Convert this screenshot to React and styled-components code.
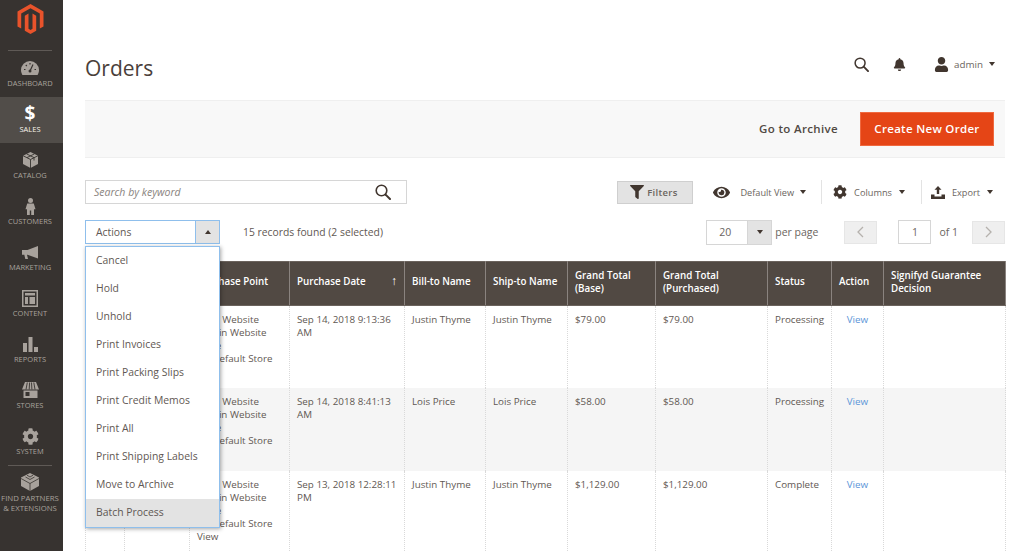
import React from 'react';
import styled, { createGlobalStyle } from 'styled-components';
import { FaBell, FaCog, FaEye, FaFilter, FaUser } from 'react-icons/fa';

const GlobalStyle = createGlobalStyle`
  html, body {
    margin: 0;
    height: 100%;
    overflow: hidden;
    background: #fff;
    font-family: "Open Sans", "Liberation Sans", sans-serif;
    color: #514943;
  }
  * { box-sizing: border-box; }
`;

const Page = styled.div`
  display: flex;
  width: 1024px;
  height: 551px;
  overflow: hidden;
`;

const Sidebar = styled.nav`
  width: 63px;
  flex: none;
  background: #373330;
  display: flex;
  flex-direction: column;
  align-items: stretch;
`;

const LogoBox = styled.div`
  height: 51px;
  display: flex;
  justify-content: center;
  padding: 4px 3px 0 0;
  position: relative;
  &::after {
    content: '';
    position: absolute;
    left: 8px;
    right: 11px;
    bottom: 0;
    height: 1px;
    background: #5f5a56;
  }
`;

const NavItem = styled.a`
  height: ${p => (p.$tall ? '60px' : '46px')};
  padding-right: 3px;
  display: flex;
  flex-direction: column;
  align-items: center;
  justify-content: flex-start;
  color: ${p => (p.$active ? '#f7f3eb' : '#a8a29c')};
  background: ${p => (p.$active ? '#514d49' : 'transparent')};
  font-size: ${p => (p.$tall ? '7.8px' : '7.5px')};
  line-height: 10px;
  text-align: center;
  white-space: nowrap;
  position: relative;
  ${p => p.$tall && `
    &::before {
      content: '';
      position: absolute;
      top: 0;
      left: 8px;
      right: 11px;
      height: 1px;
      background: #5f5a56;
    }
  `}
`;

const NavIcon = styled.span`
  height: 20px;
  margin-top: 7px;
  margin-bottom: ${p => p.$gap || 0}px;
  display: flex;
  align-items: center;
  justify-content: center;
  color: ${p => (p.$active ? '#fff' : '#a8a29c')};
`;

const Dollar = styled.span`
  display: block;
  height: 20px;
  font-size: 19px;
  font-weight: 700;
  line-height: 19px;
  color: #fff;
`;

const Main = styled.main`
  flex: 1;
  min-width: 0;
  padding: 0 19px 0 22px;
`;

const Header = styled.header`
  height: 100px;
  display: flex;
  align-items: center;
  justify-content: space-between;
  padding: 46px 0 10px;
`;

const Title = styled.h1`
  margin: 0;
  font-size: 21px;
  font-weight: 400;
  color: #4a403a;
`;

const HeaderTools = styled.div`
  display: flex;
  align-items: center;
  padding-right: 10px;
  margin-bottom: 8px;
  color: #41362f;
`;

const HeaderIcon = styled.span`
  display: flex;
  font-size: ${p => p.$size || 14}px;
  margin-right: ${p => p.$gap || 0}px;
`;

const AdminName = styled.span`
  font-size: 9.8px;
  color: #6b6560;
  margin-right: 6px;
`;

const Caret = styled.span`
  display: inline-block;
  width: 0;
  height: 0;
  border-left: 3px solid transparent;
  border-right: 3px solid transparent;
  border-${p => (p.$up ? 'bottom' : 'top')}: 4px solid #41362f;
`;

const ActionBar = styled.div`
  height: 58px;
  background: #f8f8f8;
  border-top: 1px solid #efefef;
  border-bottom: 1px solid #efefef;
  display: flex;
  align-items: center;
  justify-content: flex-end;
  padding-right: 11px;
`;

const ArchiveLink = styled.span`
  font-size: 11.5px;
  font-weight: 600;
  letter-spacing: 0.35px;
  color: #514943;
  margin: 0 22px 2px 0;
`;

const PrimaryButton = styled.button`
  width: 134px;
  height: 34px;
  padding: 0 0 2px;
  border: 1px solid #f0693f;
  background: #e54516;
  color: #fff;
  font: 600 11.5px "Open Sans", sans-serif;
  letter-spacing: 0.3px;
`;

const ToolRow = styled.div`
  display: flex;
  align-items: center;
  justify-content: space-between;
  height: 24px;
  margin-top: ${p => p.$top}px;
`;

const SearchBox = styled.div`
  width: 322px;
  height: 24px;
  border: 1px solid #d6d6d6;
  display: flex;
  align-items: center;
  justify-content: space-between;
  padding: 0 15px 0 8px;
  font-size: 10.5px;
  font-style: italic;
  color: #8a8480;
`;

const ViewTools = styled.div`
  display: flex;
  align-items: center;
  height: 24px;
`;

const FilterButton = styled.button`
  width: 76px;
  height: 23px;
  margin-right: 20px;
  padding: 0 3px 0 0;
  border: 1px solid #cfcfcf;
  background: #e3e3e3;
  color: #6b6560;
  font: 600 9.5px "Open Sans", sans-serif;
  letter-spacing: 0.3px;
  display: flex;
  align-items: center;
  justify-content: center;
  gap: 3px;
  svg { color: #41362f; font-size: 14px; }
`;

const ViewControl = styled.div`
  height: 24px;
  display: flex;
  align-items: center;
  padding: ${p => p.$pad};
  font-size: 9.2px;
  color: #6b6560;
  border-left: ${p => (p.$line ? '1px solid #e3e3e3' : 'none')};
  svg { color: #41362f; }
`;

const ControlLabel = styled.span`
  margin: 0 ${p => p.$right}px 0 ${p => p.$left}px;
`;

const LeftGroup = styled.div`
  display: flex;
  align-items: center;
  position: relative;
`;

const ActionsSelect = styled.div`
  width: 135px;
  height: 24px;
  border: 1px solid #8fbfec;
  display: flex;
  align-items: center;
  justify-content: space-between;
  font-size: 10.4px;
  padding-left: 10px;
  color: #5f5853;
`;

const ArrowBox = styled.span`
  width: 24px;
  height: 100%;
  background: #e3e3e3;
  border-left: 1px solid ${p => p.$line || '#8fbfec'};
  display: flex;
  align-items: center;
  justify-content: center;
`;

const RecordsText = styled.span`
  margin-left: 23px;
  font-size: 10.35px;
  color: #5f5853;
`;

const ActionMenu = styled.ul`
  position: absolute;
  z-index: 5;
  top: 26px;
  left: 0;
  width: 135px;
  margin: 0;
  padding: 0;
  list-style: none;
  background: #fff;
  border: 1px solid #8fbfec;
  box-shadow: 1px 1px 4px rgba(0, 0, 0, 0.35);
`;

const MenuItem = styled.li`
  height: 28px;
  line-height: 26px;
  padding-left: 10px;
  font-size: 10.4px;
  color: #5f5853;
  background: ${p => (p.$hover ? '#e3e3e3' : 'transparent')};
`;

const Pager = styled.div`
  display: flex;
  align-items: center;
  font-size: 10.5px;
  color: #6b6560;
`;

const PerPage = styled.div`
  width: 66px;
  height: 25px;
  border: 1px solid #d6d6d6;
  display: flex;
  align-items: center;
  justify-content: space-between;
  padding-left: 12px;
  margin-right: 3px;
`;

const PageButton = styled.span`
  width: 33px;
  height: 23px;
  background: #efefef;
  border: 1px solid #e6e6e6;
  display: flex;
  align-items: center;
  justify-content: center;
  margin-left: ${p => p.$left || 0}px;
`;

const PageInput = styled.span`
  width: 33px;
  height: 24px;
  border: 1px solid #d6d6d6;
  display: flex;
  align-items: center;
  justify-content: center;
  margin: 0 8px 0 21px;
`;

const TableWrap = styled.div`
  margin-top: 17px;
`;

const Grid = styled.table`
  width: 920px;
  table-layout: fixed;
  border-collapse: collapse;
  font-size: 9.8px;
  line-height: 13px;
  color: #5f5853;
`;

const Th = styled.th`
  height: 44px;
  background: #514943;
  color: #fff;
  font-weight: 600;
  font-size: 9.8px;
  text-align: left;
  padding: 0 7px 4px;
  border: 1px solid #8a837f;
  border-top-color: #6b635d;
  border-bottom-color: #6b635d;
  position: relative;
`;

const SortArrow = styled.span`
  position: absolute;
  right: 7px;
  top: 12px;
  font-size: 12px;
  font-weight: 400;
`;

const Tr = styled.tr`
  background: ${p => (p.$shade ? '#f5f5f5' : '#fff')};
`;

const Td = styled.td`
  height: 82.5px;
  vertical-align: top;
  padding: 7px 7px 0;
  border-left: 1px dotted #d9d9d9;
  border-right: 1px dotted #d9d9d9;
`;

const ViewLink = styled.span`
  display: block;
  text-align: center;
  color: #5b95d8;
`;

const Logo = () => (
  <svg width="27" height="30" viewBox="0 0 27 30">
    <path fill="#e8532b" d="M13.5 0 26.5 7.5V22.5L22.8 24.6V9.6L13.5 4.3 4.2 9.6V24.6L.5 22.5V7.5Z" />
    <path fill="#e8532b" d="M7.8 11.7 11.5 9.6V24.7L13.5 25.9 15.5 24.7V9.6L19.2 11.7V26.7L13.5 30 7.8 26.7Z" />
  </svg>
);

const Gauge = () => (
  <svg width="18" height="14" viewBox="0 0 18 14">
    <path fill="currentColor" d="M9 0a9 9 0 0 0-9 9c0 1.8.5 3.5 1.4 5h15.2c.9-1.5 1.4-3.2 1.4-5a9 9 0 0 0-9-9Z" />
    <path stroke="#373330" strokeWidth="1.2" d="M9 10 12 3.5M3 8.5h1.5M4.800 4l1 1M9 2v1.500M15 8.500h-1.500" />
    <circle cx="9" cy="10" r="1.500" fill="#373330" />
  </svg>
);

const BoxIcon = () => (
  <svg width="15" height="16" viewBox="0 0 15 16">
    <path fill="currentColor" d="M7.500 0 15 3.700V12L7.500 16 0 12V3.700Z" />
    <path fill="none" stroke="#373330" strokeWidth=".9" d="M0 3.700 7.500 7.500 15 3.700M7.500 7.500V16M3.600 1.900 11 5.600V8.500M11.400 1.900 4 5.600" />
  </svg>
);

const Figure = () => (
  <svg width="11" height="17" viewBox="0 0 11 17">
    <circle cx="5.500" cy="2.500" r="2.500" fill="currentColor" />
    <path fill="currentColor" d="M2.200 5.600h6.600L10.500 11.200H9V17H6.200v-4.500H4.800V17H2v-5.800H.5Z" />
  </svg>
);

const Megaphone = () => (
  <svg width="16" height="13" viewBox="0 0 16 13">
    <path fill="currentColor" d="M0 4h5.500L16 0v12.500L5.500 8.800H5L6 13H3.300L2.300 8.800H0Z" />
  </svg>
);

const ContentIcon = () => (
  <svg width="16" height="17" viewBox="0 0 16 17">
    <path fill="currentColor" fillRule="evenodd" d="M0 0h16v17H0Zm1.500 1.500v14h13v-14Z" />
    <path fill="currentColor" d="M3 3h10v2.500H3ZM3 7h3v7H3ZM7.500 7H13v7H7.500Z" />
  </svg>
);

const Bars = () => (
  <svg width="15" height="15" viewBox="0 0 15 15">
    <path fill="currentColor" d="M0 6h4v9H0ZM5.500 0h4v15h-4ZM11 10h4v5h-4Z" />
  </svg>
);

const StoreIcon = () => (
  <svg width="17" height="16" viewBox="0 0 17 16">
    <path fill="currentColor" d="M3 0h11l3 7.500H0Z" />
    <path stroke="#373330" strokeWidth=".9" d="M5.300 .5 4 7.500M7.600 .5 7.200 7.500M9.500 .5 9.900 7.500M11.800 .5 13 7.500" />
    <path fill="currentColor" d="M1.500 8.500h14V16h-14Z" />
    <path fill="#373330" d="M3.500 10h4v4h-4Z" />
  </svg>
);

const Lego = () => (
  <svg width="18" height="18" viewBox="0 0 18 18">
    <path fill="currentColor" d="M9 0 18 4.500V13L9 18 0 13V4.500Z" />
    <path fill="none" stroke="#373330" strokeWidth=".8" d="M0 5.500 9 10.500 18 5.500M9 10.500V18M4.500 4 9 6.500 13.500 4M6 2.200 9 4 12 2.200" />
  </svg>
);

const Magnifier = ({ size = 16 }) => (
  <svg width={size} height={size} viewBox="0 0 16 16">
    <circle cx="6.500" cy="6.500" r="5.300" fill="none" stroke="#41362f" strokeWidth="1.600" />
    <path stroke="#41362f" strokeWidth="2" strokeLinecap="round" d="M10.600 10.600 15 15" />
  </svg>
);

const ExportIcon = () => (
  <svg width="14" height="13" viewBox="0 0 14 13">
    <path fill="currentColor" d="M7 0 10.500 3.800H8.200V8H5.800V3.800H3.500ZM0 8.500h3.500v2h7v-2H14V13H0Z" />
  </svg>
);

const Chevron = ({ dir }) => (
  <svg width="7" height="12" viewBox="0 0 7 12">
    <path fill="none" stroke="#b5b1ad" strokeWidth="1.300" d={dir === 'left' ? 'M6 1 1 6l5 5' : 'M1 1l5 5-5 5'} />
  </svg>
);

const navItems = [
  { label: 'DASHBOARD', icon: <Gauge /> },
  { label: 'SALES', icon: <Dollar>$</Dollar>, active: true },
  { label: 'CATALOG', icon: <BoxIcon /> },
  { label: 'CUSTOMERS', icon: <Figure /> },
  { label: 'MARKETING', icon: <Megaphone /> },
  { label: 'CONTENT', icon: <ContentIcon /> },
  { label: 'REPORTS', icon: <Bars /> },
  { label: 'STORES', icon: <StoreIcon /> },
  { label: 'SYSTEM', icon: <FaCog size={17} /> },
];

const menu = ['Cancel', 'Hold', 'Unhold', 'Print Invoices', 'Print Packing Slips', 'Print Credit Memos', 'Print All', 'Print Shipping Labels', 'Move to Archive', 'Batch Process'];

const columns = [
  { w: 39 }, { w: 65 }, { w: 100, label: 'Purchase Point' },
  { w: 115, label: 'Purchase Date', sort: true }, { w: 81, label: 'Bill-to Name' }, { w: 82, label: 'Ship-to Name' },
  { w: 88, label: <>Grand Total<br />(Base)</> }, { w: 112, label: <>Grand Total<br />(Purchased)</> },
  { w: 64, label: 'Status' }, { w: 52, label: 'Action' }, { w: 122, label: <>Signifyd Guarantee<br />Decision</> },
];

const orders = [
  { date: 'Sep 14, 2018 9:13:36 AM', name: 'Justin Thyme', total: '$79.00', status: 'Processing' },
  { date: 'Sep 14, 2018 8:41:13 AM', name: 'Lois Price', total: '$58.00', status: 'Processing' },
  { date: 'Sep 13, 2018 12:28:11 PM', name: 'Justin Thyme', total: '$1,129.00', status: 'Complete' },
];

const App = () => (
  <Page>
    <GlobalStyle />
    <Sidebar>
      <LogoBox><Logo /></LogoBox>
      {navItems.map(item => (
        <NavItem key={item.label} $active={item.active}>
          <NavIcon $active={item.active}>{item.icon}</NavIcon>
          {item.label}
        </NavItem>
      ))}
      <NavItem $tall>
        <NavIcon $gap={1}>
          <Lego />
        </NavIcon>
        FIND PARTNERS<br />&amp; EXTENSIONS
      </NavItem>
    </Sidebar>

    <Main>
      <Header>
        <Title>Orders</Title>
        <HeaderTools>
          <HeaderIcon $gap={24}><Magnifier size={15} /></HeaderIcon>
          <HeaderIcon $size={13} $gap={28}><FaBell /></HeaderIcon>
          <HeaderIcon $size={15} $gap={5}><FaUser /></HeaderIcon>
          <AdminName>admin</AdminName>
          <Caret />
        </HeaderTools>
      </Header>

      <ActionBar>
        <ArchiveLink>Go to Archive</ArchiveLink>
        <PrimaryButton>Create New Order</PrimaryButton>
      </ActionBar>

      <ToolRow $top={22}>
        <SearchBox>
          Search by keyword
          <Magnifier />
        </SearchBox>
        <ViewTools>
          <FilterButton><FaFilter />Filters</FilterButton>
          <ViewControl $pad="0 15px 0 0">
            <FaEye size={17} />
            <ControlLabel $left={10} $right={6}>Default View</ControlLabel>
            <Caret />
          </ViewControl>
          <ViewControl $line $pad="0 16px 0 11px">
            <FaCog size={14} />
            <ControlLabel $left={7} $right={7}>Columns</ControlLabel>
            <Caret />
          </ViewControl>
          <ViewControl $line $pad="0 12px 0 9px">
            <ExportIcon />
            <ControlLabel $left={7} $right={7}>Export</ControlLabel>
            <Caret />
          </ViewControl>
        </ViewTools>
      </ToolRow>

      <ToolRow $top={16}>
        <LeftGroup>
          <ActionsSelect>
            Actions
            <ArrowBox><Caret $up /></ArrowBox>
          </ActionsSelect>
          <RecordsText>15 records found (2 selected)</RecordsText>
          <ActionMenu>
            {menu.map(label => (
              <MenuItem key={label} $hover={label === 'Batch Process'}>{label}</MenuItem>
            ))}
          </ActionMenu>
        </LeftGroup>
        <Pager>
          <PerPage>
            20
            <ArrowBox $line="#d6d6d6"><Caret /></ArrowBox>
          </PerPage>
          per page
          <PageButton $left={26}><Chevron dir="left" /></PageButton>
          <PageInput>1</PageInput>
          of 1
          <PageButton $left={14}><Chevron dir="right" /></PageButton>
        </Pager>
      </ToolRow>

      <TableWrap>
        <Grid>
          <colgroup>
            {columns.map((col, i) => <col key={i} style={{ width: col.w }} />)}
          </colgroup>
          <thead>
            <tr>
              {columns.map((col, i) => (
                <Th key={i}>
                  {col.label}
                  {col.sort && <SortArrow>↑</SortArrow>}
                </Th>
              ))}
            </tr>
          </thead>
          <tbody>
            {orders.map((order, i) => (
              <Tr key={order.date} $shade={i === 1}>
                <Td />
                <Td />
                <Td>
                  Main Website<br />
                  &nbsp;&nbsp;&nbsp;Main Website Store<br />
                  &nbsp;&nbsp;&nbsp;&nbsp;&nbsp;&nbsp;Default Store View
                </Td>
                <Td>{order.date}</Td>
                <Td>{order.name}</Td>
                <Td>{order.name}</Td>
                <Td>{order.total}</Td>
                <Td>{order.total}</Td>
                <Td>{order.status}</Td>
                <Td><ViewLink>View</ViewLink></Td>
                <Td />
              </Tr>
            ))}
          </tbody>
        </Grid>
      </TableWrap>
    </Main>
  </Page>
);

export default App;
